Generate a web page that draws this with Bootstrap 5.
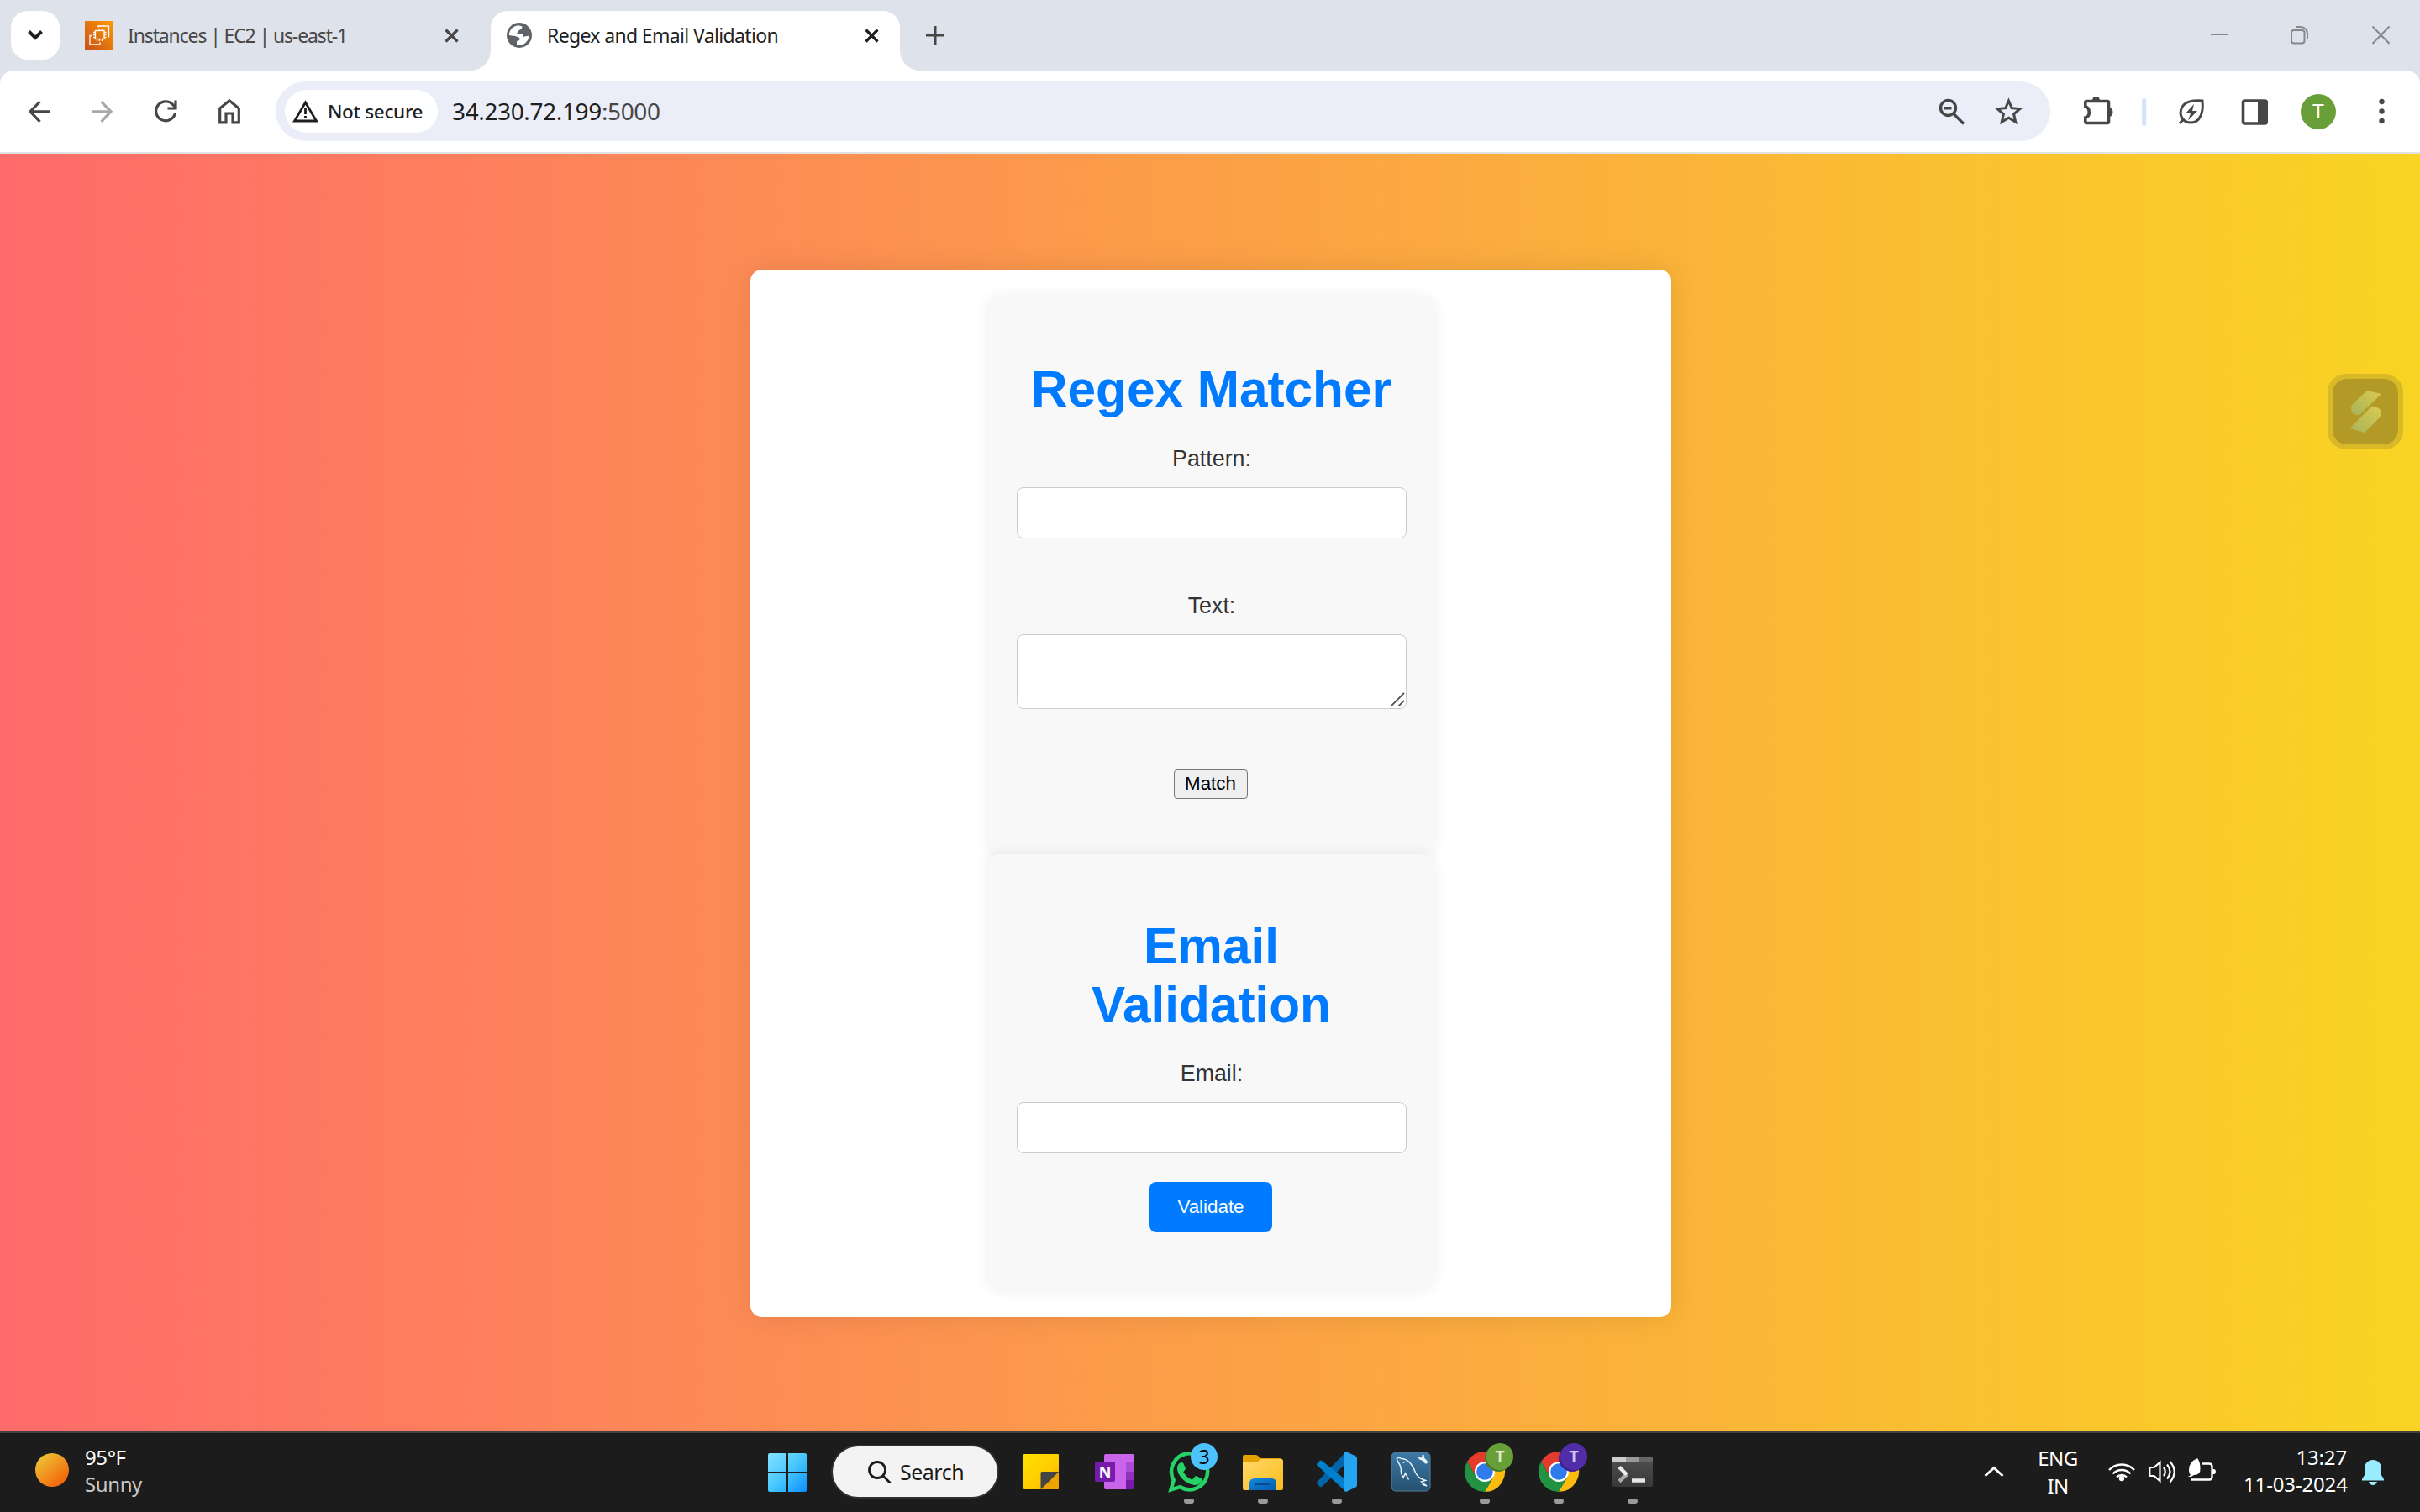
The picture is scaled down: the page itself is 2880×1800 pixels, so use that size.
<!DOCTYPE html>
<html lang="en">
<head>
<meta charset="utf-8">
<title>Regex and Email Validation</title>
<link href="https://cdn.jsdelivr.net/npm/bootstrap@5.3.0/dist/css/bootstrap.min.css" rel="stylesheet">
<style>
html,body{width:2880px;height:1800px;overflow:hidden}
body{font-family:"Noto Sans","Open Sans",sans-serif;background:#fff;color:#1f1f1f}
svg{display:block;flex:none}
.ui{white-space:nowrap;line-height:32px;font-size:24px}
/* tab strip */
.strip{height:84px;background:#dee2ea;position:relative}
.tabsearch{width:58px;height:58px;border-radius:20px;background:#fff;margin:13px 30px 0 13px}
.tab-idle{width:445px;height:84px;margin-right:38px}
.tab-live{width:487px;height:71px;margin-top:13px;border-radius:20px 20px 0 0;background:#fff;position:relative;padding:0 25px 13px 19px}
.tab-live::before,.tab-live::after{content:"";position:absolute;bottom:0;width:24px;height:24px}
.tab-live::before{left:-24px;background:radial-gradient(circle at 0 0,transparent 23.5px,#fff 24.5px)}
.tab-live::after{right:-24px;background:radial-gradient(circle at 100% 0,transparent 23.5px,#fff 24.5px)}
.title-idle{font-size:23px;letter-spacing:-1.130px;color:#474747;margin-left:18px}
.title-live{font-size:23px;letter-spacing:-.650px;margin-left:18px}
/* toolbar */
.bar-wrap{background:#dee2ea}
.toolbar{height:99px;background:#fff;border-radius:16px 16px 0 0;border-bottom:2px solid #dfe3e2;padding:13px 0 13px 34px}
.omni{width:2112px;height:71px;border-radius:36px;background:#ebeef8;padding-left:11px;margin-left:41px}
.chip{width:182px;height:51px;border-radius:26px;background:#fff;padding-left:9px}
.chip-text{font-size:22.5px;letter-spacing:-.350px;margin-left:11px}
.url{font-size:28px;letter-spacing:-.370px;margin:-2px 0 0 17px}
.port{color:#474747}
.avatar{width:42px;height:42px;border-radius:50%;background:#689f38;color:#fff;font:24px/42px Roboto,sans-serif;margin-left:39px}
/* page */
.stage{height:1521px;background:linear-gradient(90deg,#ff6b6b,#f9d423);padding-top:138px;position:relative;font-family:"Liberation Sans",Arial,sans-serif}
.panel{width:1096px;height:1247px;border-radius:14px;background:#fff;box-shadow:0 0 34px rgba(0,0,0,.1);padding-top:33px;margin-left:893px}
.tool{width:530px;border-radius:14px;background:#f8f8f8;box-shadow:0 0 17px rgba(0,0,0,.08);padding:75px 32px 0 34px}
.tool-regex{height:663px}
.tool-email{height:518px}
.tool h1{font-size:60.3px;line-height:69.5px;font-weight:700;color:#007bff;margin:0 0 32px -1px}
.tool label{font-size:26.8px;line-height:31px;color:#333;display:block;margin-bottom:18px}
.tool .form-control{border:1px solid #ccc;border-radius:8px;background:#fff;padding:0;resize:none}
.tool input.form-control{height:61px}
.tool textarea.form-control{height:89px;display:block}
.tool button{font-size:22.33px;line-height:26px;padding:0}
.btn-plain{width:88px;height:35px;border:1px solid #767676;border-radius:4px;background:#efefef;color:#000;margin:72px 3px 0 0}
.btn-go{width:146px;height:60px;border:0;border-radius:8px;background:#007bff;color:#fff;margin:34px 2px 0 0}
.gap-label{margin-top:65px}
.grip{position:absolute;right:2px;bottom:3px}
.floaty{position:absolute;left:2770px;top:262px}
/* taskbar */
.task{height:96px;background:#1c1c1c;border-top:2px solid #424242;color:#fff}
.task-left{width:914px;padding:24px 0 0 42px}
.weather{margin:-11px 0 0 19px;letter-spacing:-.400px}
.dim{color:#c8c8c8}
.pill{width:196px;height:60px;border-radius:30px;background:#f3f3f3;color:#1b1b1b;box-shadow:0 0 0 2px #303030;margin:16px 8px 0 31px;padding-left:42px}
.pill .ui{font-size:25px;letter-spacing:-.500px;margin-left:10px}
.app{width:88px;height:94px;position:relative}
.app svg{overflow:visible}
.app.on::after{content:"";position:absolute;left:38px;top:78px;width:12px;height:6px;border-radius:3px;background:#9a9a9a}
.count{position:absolute;left:46px;top:12px;width:32px;height:32px;border-radius:50%;background:#4cc2ff;color:#000;font-size:23px;line-height:33px}
.prof{background:#689f38;color:#e0e8d0;font:bold 18px/32px Roboto,sans-serif;box-shadow:-2px 2px 0 #4d7d26}
.prof.vio{background:#512da8;color:#d2c6ee;box-shadow:-2px 2px 0 #3f2090}
.tray{padding-right:43px}
.lang{margin-top:13px;width:48px;line-height:33px;letter-spacing:-.600px}
.clock{margin:13px 18px 0 0;width:123px;letter-spacing:-.150px}
</style>
<script src="https://cdn.jsdelivr.net/npm/bootstrap@5.3.0/dist/js/bootstrap.bundle.min.js"></script>
</head>
<body>
<header>
 <div class="strip d-flex">
  <div class="tabsearch d-flex align-items-center justify-content-center"><svg width="20" height="14" viewBox="0 0 20 14" fill="none" stroke="#1f1f1f" stroke-width="4"><path d="M2.500 2.500 10 10l7.500-7.500"/></svg></div>
  <div class="tab-idle d-flex align-items-center">
   <svg width="33" height="34" viewBox="0 0 33 34"><defs><linearGradient id="ec" x1="0" y1="1" x2="1" y2="0"><stop stop-color="#c8511b"/><stop offset="1" stop-color="#f90"/></linearGradient></defs><path fill="url(#ec)" d="M0 0h33v34H0z"/><g fill="none" stroke="#fff" stroke-width="1.300"><rect x="12.500" y="11.500" width="10.500" height="10"/><path d="M14.500 9v2.500m3-2.500v2.500m3-2.500v2.500m-6 10V24m3-2.500V24m3-2.500V24M10 13.500h2.500m-2.500 3h2.500m-2.500 3h2.500M23 13.500h2.500m-2.500 3h2.500m-2.500 3h2.500M16 7.500V6h12.500v12.500H27M9 17.500H6V28h12v-2.500"/></g></svg>
   <span class="ui title-idle">Instances | EC2 | us-east-1</span>
   <svg class="ms-auto" width="17" height="17" viewBox="0 0 17 17" stroke="#474747" stroke-width="3.200"><path d="m1.500 1.500 14 14m0-14-14 14"/></svg>
  </div>
  <div class="tab-live d-flex align-items-center">
   <svg width="30" height="30" viewBox="0 0 30 30"><circle cx="15" cy="15" r="15" fill="#5f6368"/><path fill="#fff" d="M2.800 15C3 9 7 4 14 3.300L18.500 4.500Q18.500 7.500 14.500 9 13.500 11 12 13H17.500Q20 14 20 16.800L27 15.500Q26 22 20 25.800 15 27.500 12 26.500V22Q16 21.500 15.500 18.500 14 17 10 16z"/></svg>
   <span class="ui title-live">Regex and Email Validation</span>
   <svg class="ms-auto" width="17" height="17" viewBox="0 0 17 17" stroke="#1f1f1f" stroke-width="3.200"><path d="m1.500 1.500 14 14m0-14-14 14"/></svg>
  </div>
  <svg style="margin:31px 0 0 31px" width="22" height="22" viewBox="0 0 22 22" stroke="#474747" stroke-width="3"><path d="M11 0v22M0 11h22"/></svg>
  <svg class="ms-auto" style="margin:31px 36px 0 0" width="213" height="22" viewBox="2631 31 213 22" fill="none" stroke="#84878b" stroke-width="2"><path d="M2631 41h21M2823.500 31.500l20 20.500m0-20.500-20 20.500M2733 32h5a8 8 0 0 1 8 8v6"/><rect x="2727" y="36" width="15.500" height="15.500" rx="3"/></svg>
 </div>
 <div class="bar-wrap"><div class="toolbar d-flex align-items-center">
  <svg width="253" height="32" viewBox="34 116.500 253 32" fill="none" stroke="#474747" stroke-width="3.200"><path d="M59 132.300H36M47.500 120.500 36 132.300l11.500 12"/><path stroke="#a8a8a8" d="M109 132.300h23M120.500 120.500l11.500 11.800-11.500 12"/><path d="M208.500 134a11.500 11.500 0 1 1-3-10.200l3.500 3.400M209 119v9.500h-9.500"/><path d="M261.700 128.500v16.800h7.300v-10.800h8v10.800h7.300v-16.800L273 119.200z"/></svg>
  <div class="omni d-flex align-items-center">
   <div class="chip d-flex align-items-center">
    <svg width="31" height="27" viewBox="0 0 31 27"><path d="M15.500 3 28.500 25h-26z" fill="none" stroke="#1f1f1f" stroke-width="2.800"/><path d="M15.500 10v7m0 2v3" stroke="#1f1f1f" stroke-width="2.800"/></svg>
    <span class="ui fw-medium chip-text">Not secure</span>
   </div>
   <span class="ui url">34.230.72.199<span class="port">:5000</span></span>
   <svg class="ms-auto" style="margin-right:31px" width="101" height="34" viewBox="2308 115 101 34" fill="none" stroke="#474747" stroke-width="3.400"><circle cx="2318.500" cy="127.500" r="9"/><path d="M2325 134.500l12 12M2314 127.700h8.500"/><path stroke-width="3" d="M2390.500 119l3.700 8.700 9.600.9-7.200 6.300 2.100 9.300-8.200-4.900-8.200 4.900 2.100-9.300-7.200-6.300 9.600-.9z"/></svg>
  </div>
  <svg style="margin-left:39px" width="220" height="36" viewBox="2479 114 220 36" fill="none" stroke="#474747" stroke-width="3.600"><path d="M2483.500 119.500h24.500q1.500 0 1.500 1.500v23q0 1.500-1.500 1.500h-24.500q-1.700 0-1.700-1.500v-5q4.500-1 4.500-6.500t-4.500-6.500V121q0-1.500 1.700-1.500z"/><path fill="#474747" stroke="none" d="M2490 119a4.500 5.500 0 0 1 9 0zM2510 127a4.500 5.500 0 0 1 0 11z"/><path stroke="#d3e3fd" stroke-width="5" stroke-linecap="round" d="M2551.700 118.500v28"/><path stroke-width="3" d="M2621 119q-13-1-19 2.500c-7 4-9 13-4.500 19 5 6 14 6 19 .5 5-6 5.500-13 4.500-22zM2599 140.500l-5 5.500"/><path fill="#474747" stroke="none" d="M2611 123l-10 11h6l-3 8.500 11-11.500h-6z"/><rect x="2669.500" y="119" width="28" height="27" rx="2"/><path fill="#474747" stroke="none" d="M2687 118h11v29h-11z"/></svg>
  <div class="avatar text-center">T</div>
  <svg style="margin-left:51px" width="7" height="31" viewBox="0 0 7 31" fill="#474747"><circle cx="3.500" cy="4" r="3.200"/><circle cx="3.500" cy="15.500" r="3.200"/><circle cx="3.500" cy="27" r="3.200"/></svg>
 </div></div>
</header>
<main class="stage">
 <div class="panel d-flex flex-column align-items-center text-center">
  <section class="tool tool-regex">
   <h1>Regex Matcher</h1>
   <label for="pattern">Pattern:</label>
   <input id="pattern" class="form-control">
   <label for="text" class="gap-label">Text:</label>
   <div class="position-relative"><textarea id="text" class="form-control"></textarea>
    <svg class="grip" width="17" height="17" viewBox="0 0 17 17" stroke="#555" stroke-width="1.800"><path d="M.5 16.500 16 1M9.500 16.500 16 10"/></svg></div>
   <button class="btn-plain">Match</button>
  </section>
  <section class="tool tool-email">
   <h1>Email<br>Validation</h1>
   <label for="email">Email:</label>
   <input id="email" class="form-control">
   <button class="btn-go">Validate</button>
  </section>
 </div>
 <svg class="floaty" width="90" height="90" viewBox="0 0 90 90"><defs><linearGradient id="f1" x1="0" y1="1" x2="1" y2="0"><stop stop-color="#a9b25a"/><stop offset="1" stop-color="#d8ca50"/></linearGradient></defs><rect width="90" height="90" rx="22" fill="#d9b926"/><rect x="6" y="6" width="78" height="78" rx="17" fill="#b39a26"/><g fill="url(#f1)"><path d="M47 20l17 4-26 25q-8 1-10-6-.5-5 3-8z"/><path d="M52 39q11 0 12 7 0 4-3 7L44 70l-17.500-5z"/></g></svg>
</main>
<footer class="task d-flex">
 <div class="task-left d-flex">
  <svg width="40" height="40" viewBox="0 0 40 40"><defs><linearGradient id="sn" x1=".15" y1=".15" x2=".75" y2=".85"><stop stop-color="#efbe33"/><stop offset="1" stop-color="#f26b0e"/></linearGradient></defs><circle cx="20" cy="20" r="20" fill="url(#sn)"/></svg>
  <div class="ui weather">95°F<br><span class="dim">Sunny</span></div>
 </div>
 <svg style="margin-top:24px" width="46" height="46" viewBox="0 0 46 46"><defs><linearGradient id="wn" gradientUnits="userSpaceOnUse" x1="0" y1="0" x2="46" y2="46"><stop stop-color="#85e0ff"/><stop offset=".5" stop-color="#48c8ff"/><stop offset="1" stop-color="#0a90ff"/></linearGradient></defs><path fill="url(#wn)" d="M2 0h20v22H0V2q0-2 2-2zM24 0h20q2 0 2 2v20H24zM0 24h22v22H2q-2 0-2-2zM24 24h22v20q0 2-2 2H24z"/></svg>
 <div class="pill d-flex align-items-center"><svg width="28" height="27" viewBox="0 0 28 27" fill="none" stroke="#1b1b1b" stroke-width="2.800"><circle cx="11" cy="11" r="9.500"/><path d="M18 18l8 8" stroke-linecap="round"/></svg><span class="ui">Search</span></div>
 <div class="app"><svg width="88" height="94" viewBox="1195 1706 88 94"><defs><linearGradient id="st" x1="0" y1="0" x2="1" y2="1"><stop stop-color="#ffe000"/><stop offset=".6" stop-color="#ffcc00"/><stop offset="1" stop-color="#e9a000"/></linearGradient></defs><path fill="url(#st)" d="M1219 1731h40q1 0 1 1v20l-21 21h-20q-1 0-1-1v-40q0-1 1-1z"/><path fill="#eda400" d="M1260 1752v20q0 1-1 1h-20z"/><path fill="#444" d="M1260 1752h-20q-1.500 0-1.500 1.500V1773z"/></svg></div>
 <div class="app"><svg width="88" height="94" viewBox="1283 1706 88 94"><rect x="1314" y="1731" width="36" height="42" rx="2" fill="#ca64ea"/><path fill="#ae4bd5" d="M1340 1741h10v11h-10z"/><path fill="#9332bf" d="M1340 1752h10v10h-10z"/><path fill="#7719aa" d="M1340 1762h10v10q0 1-1 1h-9z"/><rect x="1303" y="1740" width="24" height="24" rx="2" fill="#7719aa"/><text x="1315" y="1758.500" fill="#fff" font-family="Open Sans" font-weight="700" font-size="18" text-anchor="middle">N</text></svg></div>
 <div class="app on"><svg width="88" height="94" viewBox="1371 1706 88 94"><path d="M1393.500 1773.500l3.200-11.500a21.500 21.500 0 1 1 7.800 8.200z" fill="none" stroke="#25d366" stroke-width="4.500"/><path fill="#25d366" d="M1404.500 1741.500q2-1 3.500 0l3 6.500q0 1.500-2.800 4.200 4 7 10.500 9.500l3.500-4q1-1 2-.5l6 3q.8.700.3 2.500-1.500 5-8 5.300c-11-.5-21.500-11.500-21.500-20 0-3 1.500-5.500 3.500-6.500z"/></svg><span class="count text-center">3</span></div>
 <div class="app on"><svg width="88" height="94" viewBox="1459 1706 88 94"><defs><linearGradient id="fo" x1="0" y1="0" x2="1" y2="1"><stop stop-color="#ffd96b"/><stop offset="1" stop-color="#fcbb1b"/></linearGradient><linearGradient id="fb" x1="0" y1="0" x2="1" y2="1"><stop stop-color="#128bdc"/><stop offset="1" stop-color="#0658ac"/></linearGradient></defs><path fill="#e2a100" d="M1481 1732h13q2 0 3 1l3 3h25v10h-46v-12q0-2 2-2z"/><path fill="url(#fo)" d="M1479 1741h17l4-4h25q2 0 2 2v33q0 2-2 2h-44q-2 0-2-2z"/><path fill="url(#fb)" d="M1487 1774v-8q0-6 6-6h20q6 0 6 6v8z"/><path stroke="#0a4a92" stroke-width="2" d="M1493 1767h19"/></svg></div>
 <div class="app on"><svg width="88" height="94" viewBox="1547 1706 88 94"><path fill="#0065a9" d="M1602 1728v14l-29 28q-1 .8-2 0l-3.500-3.500q-1-1.300 0-2.600z"/><path fill="#0080cc" d="M1602 1776v-14l-29-23q-1.500-1-2.500 0l-3 3q-1 1.300 0 2.600z"/><path fill="#25a5f1" d="M1602 1728l11.500 5.500q1.500 1 1.500 2.500v32q0 1.500-1.500 2.500L1602 1776q-2-.5-2.500-2v-44q.5-1.500 2.500-2z"/></svg></div>
 <div class="app"><svg width="88" height="94" viewBox="1635 1706 88 94"><defs><linearGradient id="my" x1="0" y1="0" x2="0" y2="1"><stop stop-color="#3d7aa8"/><stop offset="1" stop-color="#24516f"/></linearGradient></defs><rect x="1656" y="1729" width="46" height="46" rx="5" fill="url(#my)" stroke="#557e9b" stroke-width="1"/><path fill="none" stroke="#e8f2f8" stroke-width="1.500" d="M1676.500 1761.500l-4-7.500-2.500 5q-3.500-5-2.500-10-1-5-3-7.500-2.500-4-2-5.500 2-1.500 5 .5 6 0 11 5.500 4 5 6 11 2 4.500 6 7l6 2.500-5 1.500 6.500 5-5.500-2"/><circle cx="1670.500" cy="1741" r="1" fill="#fff"/><path stroke="#e8f2f8" stroke-width="4" stroke-linecap="round" d="M1692.500 1736l4.500 4.500"/><path fill="none" stroke="#e8f2f8" stroke-width="2.200" d="M1688.500 1735q2 3 4.500 1.500t0-4.500"/></svg></div>
 <div class="app on"><svg width="88" height="94" viewBox="-44 -46 88 94"><g id="chr"><path fill="#e33b2e" d="M-20.800-12A24 24 0 0 1 20.800-12H0L-10.400 6z"/><path fill="#fbbc0d" d="M20.800-12A24 24 0 0 1 0 24L10.400 6 0-12z"/><path fill="#229342" d="M0 24A24 24 0 0 1-20.800-12L-10.400 6 10.400 6z"/><circle r="12" fill="#fff"/><circle r="9.800" fill="#2f7bed"/></g></svg><span class="count prof text-center">T</span></div>
 <div class="app on"><svg width="88" height="94" viewBox="-44 -46 88 94"><use href="#chr"/></svg><span class="count prof vio text-center">T</span></div>
 <div class="app on"><svg width="88" height="94" viewBox="1899 1706 88 94"><defs><linearGradient id="tm" x1="0" y1="0" x2="0" y2="1"><stop stop-color="#505050"/><stop offset="1" stop-color="#383838"/></linearGradient></defs><rect x="1919" y="1734" width="48" height="36" rx="2" fill="url(#tm)"/><path fill="#ccc" d="M1921 1734h14v6h-16v-4q0-2 2-2z"/><path fill="#999" d="M1935 1734h16v6h-16z"/><path fill="#666" d="M1951 1734h14q2 0 2 2v4h-16z"/><g fill="none" stroke-width="4.500"><path stroke="#aaa" d="M1927 1763.500l9-8.500"/><path stroke="#eee" d="M1927 1746.500l9 9"/><path stroke="#e6e6e6" d="M1942 1762.500h16"/></g></svg></div>
 <div class="tray ms-auto d-flex">
  <svg style="margin:39px 40px 0 0" width="24" height="14" viewBox="0 0 24 14" fill="none" stroke="#fff" stroke-width="2.800"><path d="M1.500 12 12 2.500 22.500 12"/></svg>
  <div class="ui text-center lang">ENG<br>IN</div>
  <svg style="margin:29px 33px 0 36px" width="128" height="32" viewBox="2509 1735 128 32" fill="none" stroke="#fff" stroke-width="2.400"><path d="M2510 1750a20.500 20.500 0 0 1 30 0M2514.500 1754.500a14.500 14.500 0 0 1 21 0M2519 1758.500a8.500 8.500 0 0 1 12 0"/><circle cx="2525" cy="1760" r="3.200" fill="#fff" stroke="none"/><path d="M2558.500 1747h5l7-6v22l-7-6h-5q-.5-5 0-10zM2575 1747q3.500 5 0 10M2579 1743.500q7 8.500 0 17M2582.500 1740q10.500 12 0 24.500" stroke-width="2.200"/><path d="M2620 1742.500h9q3.500 0 3.500 3.500v12q0 3.500-3.500 3.500h-22"/><path fill="#fff" stroke="none" d="M2633 1749h2.500q1.500 1 1.500 3t-1.500 3h-2.500zM2615 1736q-11 5-10 15 .5 4 2 5-2 1.500-3 2h4q1-1 3-2 8 0 7.500-8 0-8-3.500-12z"/></svg>
  <div class="ui text-end clock">13:27<br>11-03-2024</div>
  <svg style="margin-top:32px" width="26" height="30" viewBox="0 0 26 30" fill="#99ebff"><path d="M13 0C7 0 3 4.500 3 10v8l-3 5v1.500h26V23l-3-5v-8C23 4.500 19 0 13 0zM8 26h10q-1.500 4-5 4t-5-4z"/></svg>
 </div>
</footer>
</body>
</html>
